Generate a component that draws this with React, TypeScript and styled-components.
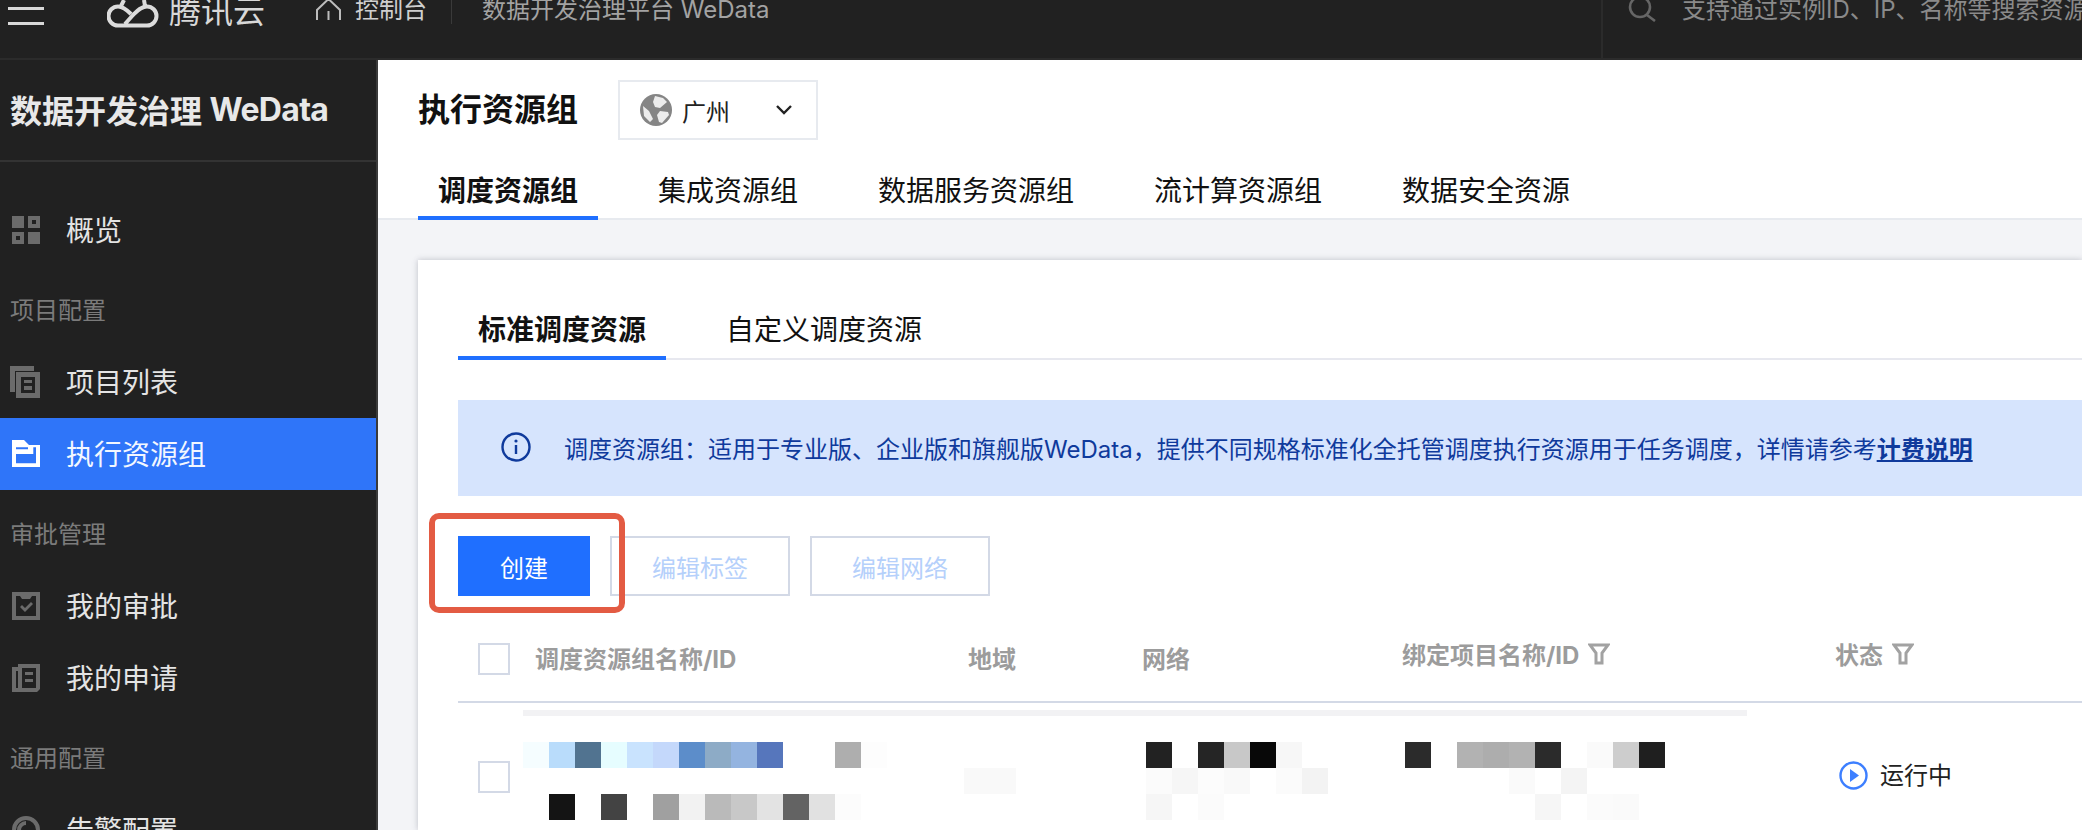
import React from "react";
import styled, { createGlobalStyle } from "styled-components";

const Global = createGlobalStyle`
  html, body { margin: 0; padding: 0; background: #f3f4f7; overflow: hidden; }
  * { box-sizing: border-box; }
  body { font-family: Inter, "Noto Sans CJK SC", "Liberation Sans", sans-serif; }
`;

const Page = styled.div`
  width: 2082px; height: 830px; overflow: hidden;
  display: flex; flex-direction: column; background: #f3f4f7; position: relative;
`;

/* ---------- top bar ---------- */
const TopBar = styled.header`
  height: 60px; flex: none; display: flex; align-items: flex-start;
  background: #212121; border-bottom: 2px solid #2b2b2b; overflow: hidden;
`;
const Burger = styled.div`
  width: 36px; margin: 7px 0 0 8px; display: flex; flex-direction: column; gap: 12px;
  span { display: block; height: 3px; background: #d8d8d8; }
`;
const CloudLogo = styled.svg`width: 52px; height: 28px; margin-left: 63px; flex: none;`;
const Brand = styled.span`
  font-size: 32px; line-height: 24px; color: #d8d8d8; margin-left: 10px; white-space: nowrap;
`;
const HomeIcon = styled.svg`width: 28px; height: 20px; margin-left: 50px; flex: none;`;
const ConsoleLink = styled.span`
  font-size: 24px; line-height: 24px; margin: -2px 0 0 12px; color: #cfcfcf; white-space: nowrap;
`;
const BarDivider = styled.i`width: 1px; height: 24px; margin-left: 24px; background: #3a3a3a; flex: none;`;
const PlatformName = styled.span`
  font-size: 24px; line-height: 24px; margin: -2px 0 0 30px; width: 1119px; color: #a3a3a3; white-space: nowrap;
`;
const SearchArea = styled.div`
  flex: 1; height: 58px; min-width: 0; border-left: 2px solid #2b2b2b;
  display: flex; align-items: flex-start; padding-left: 25px; overflow: hidden;
`;
const SearchIcon = styled.svg`width: 29px; height: 22px; flex: none;`;
const SearchHint = styled.span`
  font-size: 24px; line-height: 24px; margin: -2px 0 0 25px; color: #8a8a8a; white-space: nowrap;
`;

/* ---------- body ---------- */
const Body = styled.div`flex: 1; min-height: 0; display: flex;`;

const Sidebar = styled.nav`
  width: 378px; flex: none; background: #212121; border-right: 2px solid #3a3a3a; overflow: hidden;
`;
const ProductTitle = styled.div`
  height: 102px; padding: 0 0 2px 10px; display: flex; align-items: center;
  font-size: 32px; font-weight: 700; color: #e8e8e8; white-space: pre;
  border-bottom: 2px solid #333; margin-bottom: 32px;
`;
const ProductLatin = styled.span`letter-spacing: -0.7px;`;
const NavItem = styled.div<{ $active?: boolean }>`
  height: 72px; display: flex; align-items: center; padding: 0 0 2px 10px;
  font-size: 28px; color: ${(p) => (p.$active ? "#f3f7ff" : "#e4e4e4")};
  background: ${(p) => (p.$active ? "#2f75f9" : "transparent")};
`;
const NavIconBox = styled.svg`width: 32px; height: 32px; flex: none; margin: 2px 24px 0 0;`;
const NavGroup = styled.div`
  height: 80px; padding: 28px 0 0 10px; font-size: 24px; line-height: 34px; color: #7b7b7b;
`;

const Main = styled.main`flex: 1; min-width: 0; display: flex; flex-direction: column;`;
const Head = styled.div`background: #fff; border-bottom: 2px solid #e7eaef; height: 160px; padding: 20px 0 0 40px;`;
const TitleRow = styled.div`display: flex; align-items: center; height: 60px;`;
const PageTitle = styled.h1`margin: 0; font-size: 32px; font-weight: 700; color: #111; line-height: 60px; width: 200px;`;
const RegionSelect = styled.div`
  width: 200px; height: 60px; border: 2px solid #e7eaef; display: flex; align-items: center;
  padding-left: 20px; font-size: 24px; color: #222;
`;
const Globe = styled.svg`width: 32px; height: 32px; flex: none; margin-right: 10px;`;
const RegionName = styled.span`width: 93px;`;
const Chevron = styled.svg`width: 18px; height: 12px; flex: none;`;
const TopTabs = styled.div`display: flex; gap: 40px; margin-top: 20px;`;
const TopTab = styled.div<{ $active?: boolean }>`
  height: 60px; padding: 2px 20px 0; display: flex; align-items: center;
  font-size: 28px; color: #111; font-weight: ${(p) => (p.$active ? 700 : 400)};
  border-bottom: 4px solid ${(p) => (p.$active ? "#1f6fff" : "transparent")};
`;

const Card = styled.section`
  margin: 40px 0 0 40px; flex: 1; background: #fff; padding: 40px 0 0 40px;
  box-shadow: 0 0 6px rgba(54, 58, 80, 0.28); position: relative; min-height: 0; overflow: hidden;
`;
const SubTabs = styled.div`display: flex; gap: 40px; border-bottom: 2px solid #e7e8ef; height: 60px;`;
const SubTab = styled.div<{ $active?: boolean }>`
  height: 60px; padding: 0 20px; display: flex; align-items: center;
  font-size: 28px; color: #111; font-weight: ${(p) => (p.$active ? 700 : 400)};
  border-bottom: 4px solid ${(p) => (p.$active ? "#1f6fff" : "transparent")};
`;
const Notice = styled.div`
  margin-top: 40px; height: 96px; background: #d6e4fd; display: flex; align-items: center;
  padding: 0 0 2px 43px; font-size: 24px; color: #0f3a9c; white-space: nowrap;
`;
const InfoIcon = styled.svg`width: 30px; height: 30px; flex: none; margin-right: 33px;`;
const NoticeLink = styled.a`font-weight: 700; text-decoration: underline; color: #0f3a9c;`;
const Toolbar = styled.div`margin-top: 40px; display: flex; gap: 20px; height: 60px;`;
const PrimaryButton = styled.div`
  width: 132px; height: 60px; background: #1f6fff; color: #fff; font-size: 24px;
  display: flex; align-items: center; justify-content: center;
`;
const GhostButton = styled.div`
  width: 180px; height: 60px; border: 2px solid #d3d9e6; color: #b5d0fb; font-size: 24px;
  display: flex; align-items: center; justify-content: center;
`;
const Highlight = styled.div`
  position: absolute; left: 11px; top: 253px; width: 196px; height: 100px;
  border: 6px solid #e35b43; border-radius: 10px; pointer-events: none;
`;

const columns = "57px 433px 174px 260px 433px 1fr";
const TableHead = styled.div`
  margin-top: 20px; height: 87px; padding-left: 20px; display: grid; grid-template-columns: ${columns};
  align-items: center; border-bottom: 2px solid #d3d9e6;
`;
const Check = styled.div`width: 32px; height: 32px; border: 2px solid #d3d9e6; background: #fff;`;
const HeadCell = styled.div<{ $raised?: boolean }>`
  display: flex; align-items: center; gap: 9px; font-size: 24px; font-weight: 700; color: #9c9c9c;
  white-space: nowrap; transform: translateY(${(p) => (p.$raised ? "-5px" : "-1px")});
`;
const FilterIcon = styled.svg`width: 22px; height: 22px; flex: none;`;
const Smear = styled.div`margin: 7px 0 0 65px; width: 1224px; height: 6px; background: #f2f2f4;`;
const Row = styled.div`
  padding-left: 20px; display: grid; grid-template-columns: ${columns}; align-items: start;
`;
const RowCheck = styled(Check)`margin-top: 45px;`;
const Blocks = styled.svg<{ $dx: number }>`
  display: block; margin: 26px 0 0 ${(p) => p.$dx}px; overflow: visible;
`;
const Status = styled.div`
  margin: 45px 0 0 4px; display: flex; align-items: center; gap: 12px; font-size: 24px; line-height: 28px; color: #222;
`;
const PlayIcon = styled.svg`width: 29px; height: 29px; flex: none;`;

const Mosaic = ({ rows, dx }: { rows: (string | null)[][]; dx: number }) => {
  const w = Math.max(...rows.map((r) => r.length)) * 26;
  return (
    <Blocks $dx={dx} width={w} height={rows.length * 26} viewBox={`0 0 ${w} ${rows.length * 26}`}>
      {rows.map((r, y) =>
        r.map((c, x) => (c ? <rect key={`${x}-${y}`} x={x * 26} y={y * 26} width={26} height={26} fill={c} /> : null))
      )}
    </Blocks>
  );
};

const nameCells = [
  ["#f5fdff", "#b9dcfb", "#517390", "#e6fdff", "#c9e3fe", "#c4d8fb", "#5c8dca", "#8dabc6", "#94b4e0", "#5676bc", null, null, "#aeaeae", "#fdfdfd"],
  [],
  [null, "#141414", null, "#434343", null, "#a0a0a0", "#f2f2f2", "#bababa", "#c8c8c8", "#e3e3e3", "#636363", "#e1e1e1", "#fcfcfc"],
];
const regionCells = [[], ["#f9f9f9", "#f9f9f9"]];
const netCells = [
  ["#222222", null, "#252525", "#c8c8c8", "#080808", "#f7f7f7"],
  ["#fbfbfb", "#f6f6f6", "#fcfcfc", "#f9f9f9", null, "#fbfbfb", "#f3f3f3"],
  ["#f6f6f6", null, "#fbfbfb"],
];
const projectCells = [
  ["#2b2b2b", null, "#b2b2b2", "#adadad", "#b2b2b2", "#2b2b2b", null, "#fafafa", "#cdcdcd", "#1f1f1f"],
  [null, null, null, null, "#fafafa", null, "#f4f4f4"],
  [null, null, null, null, null, "#f6f6f6", null, "#fbfbfb", "#fafafa"],
];

const G = "#6b6b6b";
const icons: Record<string, React.ReactNode> = {
  overview: (
    <path fill={G} fillRule="evenodd" d="M2 2h12v12H2zM18 2h12v12H18zM22 6v4h4V6zM2 18h12v12H2zM6 22v4h4v-4zM18 18h12v12H18z" />
  ),
  list: (
    <g fill={G} fillRule="evenodd">
      <path d="M0 0h24v5H5v21H0z" />
      <path d="M6 6h24v26H6zM11 11v16h14V11zM14 14h8v3h-8zM14 20h8v4h-8z" />
    </g>
  ),
  folder: (
    <path fill="#fff" fillRule="evenodd" d="M2 2h12l5 5h11v22H2zM6 9.300v2h12v-2zM23.300 9.300V16H6v9.300h20V9.300z" />
  ),
  approve: (
    <path fill={G} fillRule="evenodd" d="M2 2h28v28H2zM6 6v20h20V6h-4l-2 3h-8l-2-3zM10 17l2-2 3 3 6-6 2 2-8 8z" />
  ),
  apply: (
    <path fill={G} fillRule="evenodd" d="M2 5h6V2h22v25l-3 3H2zM6 9v17h2V9zM12 6v20h14V6zM15 10h8v3h-8zM15 17h8v3h-8z" />
  ),
  alarm: (
    <g fill="none" stroke={G} strokeWidth="4">
      <circle cx="16" cy="16" r="12" />
      <path d="M16 9a7 7 0 1 0 7 7" />
    </g>
  ),
};

const Nav = ({ icon, label, active }: { icon: string; label: string; active?: boolean }) => (
  <NavItem $active={active}>
    <NavIconBox viewBox="0 0 32 32">{icons[icon]}</NavIconBox>
    {label}
  </NavItem>
);

const Filter = () => (
  <FilterIcon viewBox="0 0 22 22">
    <path d="M2 2h18l-6 8v10h-6V10z" fill="none" stroke="#a2a2a2" strokeWidth="3" />
  </FilterIcon>
);

export default function App() {
  return (
    <Page>
      <Global />
      <TopBar>
        <Burger>
          <span />
          <span />
        </Burger>
        <CloudLogo viewBox="0 0 52 28">
          <path
            d="M11 25.500H40A9.500 9.500 0 0 0 40 6.500C34 6.500 30 11 26 15L18 24M11 25.500A9.500 9.500 0 0 1 11 6.500C16 6.500 20 10 24 14M14 6L17 0M38 6L37 0"
            fill="none"
            stroke="#dcdcdc"
            strokeWidth="4"
          />
        </CloudLogo>
        <Brand>腾讯云</Brand>
        <HomeIcon viewBox="0 0 28 20">
          <path d="M2 20V10L13.500-1 25 10V20M13.500 11V20" fill="none" stroke="#bdbdbd" strokeWidth="2" />
        </HomeIcon>
        <ConsoleLink>控制台</ConsoleLink>
        <BarDivider />
        <PlatformName>数据开发治理平台 WeData</PlatformName>
        <SearchArea>
          <SearchIcon viewBox="0 0 29 22">
            <circle cx="12" cy="7" r="10" fill="none" stroke="#666" strokeWidth="2.6" />
            <path d="M19 15l8 6" stroke="#666" strokeWidth="2.6" />
          </SearchIcon>
          <SearchHint>支持通过实例ID、IP、名称等搜索资源</SearchHint>
        </SearchArea>
      </TopBar>
      <Body>
        <Sidebar>
          <ProductTitle>
            数据开发治理 <ProductLatin>WeData</ProductLatin>
          </ProductTitle>
          <Nav icon="overview" label="概览" />
          <NavGroup>项目配置</NavGroup>
          <Nav icon="list" label="项目列表" />
          <Nav icon="folder" label="执行资源组" active />
          <NavGroup>审批管理</NavGroup>
          <Nav icon="approve" label="我的审批" />
          <Nav icon="apply" label="我的申请" />
          <NavGroup>通用配置</NavGroup>
          <Nav icon="alarm" label="告警配置" />
        </Sidebar>
        <Main>
          <Head>
            <TitleRow>
              <PageTitle>执行资源组</PageTitle>
              <RegionSelect>
                <Globe viewBox="0 0 32 32">
                  <circle cx="16" cy="16" r="16" fill="#858585" />
                  <path d="M15 2l8 2 4 4-7 6-5-1-2-5zM20 17l8 1 1 3-7 8-3-1-2-7zM3 12l6 5 4 8-3 3-6-6z" fill="#ececec" />
                </Globe>
                <RegionName>广州</RegionName>
                <Chevron viewBox="0 0 18 12">
                  <path d="M2 2l7 7 7-7" fill="none" stroke="#222" strokeWidth="2.4" />
                </Chevron>
              </RegionSelect>
            </TitleRow>
            <TopTabs>
              <TopTab $active>调度资源组</TopTab>
              <TopTab>集成资源组</TopTab>
              <TopTab>数据服务资源组</TopTab>
              <TopTab>流计算资源组</TopTab>
              <TopTab>数据安全资源</TopTab>
            </TopTabs>
          </Head>
          <Card>
            <SubTabs>
              <SubTab $active>标准调度资源</SubTab>
              <SubTab>自定义调度资源</SubTab>
            </SubTabs>
            <Notice>
              <InfoIcon viewBox="0 0 30 30">
                <circle cx="15" cy="15" r="13.500" fill="none" stroke="#0f3a9c" strokeWidth="2.4" />
                <path d="M15 13v9" stroke="#0f3a9c" strokeWidth="2.4" />
                <circle cx="15" cy="9" r="1.600" fill="#0f3a9c" />
              </InfoIcon>
              <span>
                调度资源组：适用于专业版、企业版和旗舰版WeData，提供不同规格标准化全托管调度执行资源用于任务调度，详情请参考
                <NoticeLink>计费说明</NoticeLink>
              </span>
            </Notice>
            <Toolbar>
              <PrimaryButton>创建</PrimaryButton>
              <GhostButton>编辑标签</GhostButton>
              <GhostButton>编辑网络</GhostButton>
            </Toolbar>
            <Highlight />
            <TableHead>
              <Check />
              <HeadCell>调度资源组名称/ID</HeadCell>
              <HeadCell>地域</HeadCell>
              <HeadCell>网络</HeadCell>
              <HeadCell $raised>
                绑定项目名称/ID
                <Filter />
              </HeadCell>
              <HeadCell $raised>
                状态
                <Filter />
              </HeadCell>
            </TableHead>
            <Smear />
            <Row>
              <RowCheck />
              <Mosaic rows={nameCells} dx={-12} />
              <Mosaic rows={regionCells} dx={-4} />
              <Mosaic rows={netCells} dx={4} />
              <Mosaic rows={projectCells} dx={3} />
              <Status>
                <PlayIcon viewBox="0 0 29 29">
                  <circle cx="14.500" cy="14.500" r="13" fill="none" stroke="#3d7fff" strokeWidth="2.4" />
                  <path d="M11 8l9 6.500-9 6.500z" fill="#3d7fff" />
                </PlayIcon>
                运行中
              </Status>
            </Row>
          </Card>
        </Main>
      </Body>
    </Page>
  );
}
